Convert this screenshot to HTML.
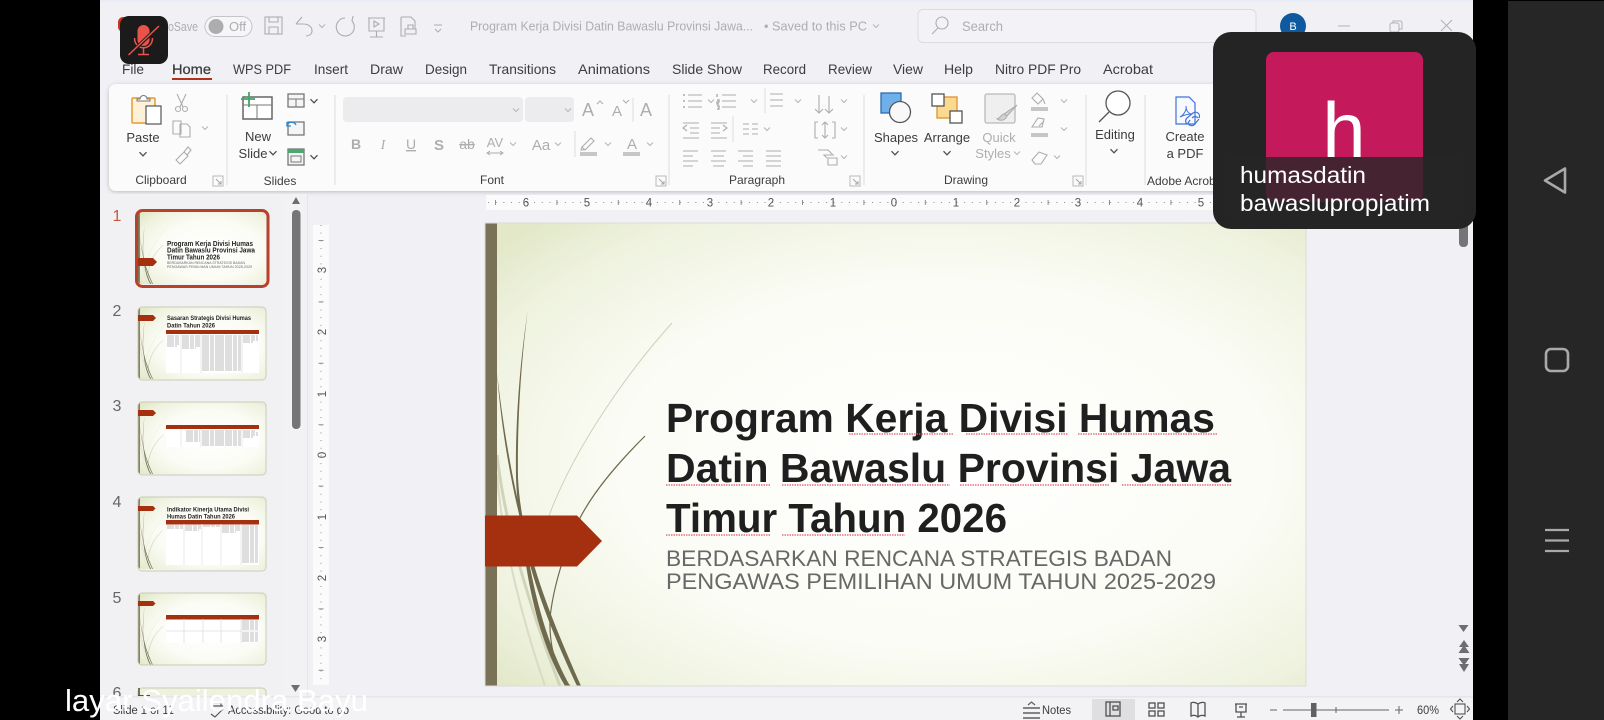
<!DOCTYPE html>
<html><head><meta charset="utf-8">
<style>
html,body{margin:0;padding:0;width:1604px;height:720px;overflow:hidden;background:#000}
svg.root{display:block;position:absolute;left:0;top:0;filter:blur(.3px)}
text{font-family:"Liberation Sans",sans-serif;fill:#3d3d3d;font-size:13px}
.g,.g text{fill:#aeaeb1}
.m{text-anchor:middle}
.i{fill:none;stroke:#adadaf;stroke-width:1.1}
.c{fill:none;stroke:#b2b2b4;stroke-width:1}
.rn{font-size:11.5px;fill:#555;text-anchor:middle}
.tt{font-weight:bold;fill:#1f1f1f}
.st{fill:#686868}
.tb{fill:none;stroke:#a9a9a9;stroke-width:.7;stroke-dasharray:7 1 4 1 9 1}
</style></head><body>
<svg class="root" width="1604" height="720" viewBox="0 0 1604 720" xmlns="http://www.w3.org/2000/svg">
<defs>
<radialGradient id="bgg" cx=".56" cy=".52" r=".72">
<stop offset="0" stop-color="#ffffff"/><stop offset=".55" stop-color="#fbfcf5"/><stop offset=".85" stop-color="#eef2de"/><stop offset="1" stop-color="#e2e8c8"/>
</radialGradient>
<filter id="sh" x="-2%" y="-10%" width="104%" height="125%"><feDropShadow dx="0" dy="1" stdDeviation="2" flood-color="#000" flood-opacity=".22"/></filter>
<g id="art">
<rect width="821" height="463" fill="url(#bgg)"/>
<path d="M12 232C20 305 45 385 75 463" fill="none" stroke="#d0d4b9" stroke-width="3"/>
<path d="M12 252C18 325 40 405 60 463" fill="none" stroke="#d9dcc4" stroke-width="2"/>
<path d="M187 100C140 152 90 225 65 290C55 316 50 336 48 350" fill="none" stroke="#cdd0b8" stroke-width="1"/>
<path d="M42.7 88C36 132 30 192 31 255C33 315 52 378 92 463L96 463C58 378 36 315 33 255C32 192 37 132 42.7 88Z" fill="#6f6a4e"/>
<path d="M12 150C16 203 25 255 35 295C40 345 50 412 80 463L85 463C56 412 44 345 37 295C27 255 18 203 12 150Z" fill="#6f6a4e"/>
<path d="M160 213C135 238 110 266 95 295C80 325 68 365 65 395C64 425 72 450 85 463" fill="none" stroke="#6f6a4e" stroke-width="1.2"/>
<rect width="12" height="463" fill="#7a7256"/>
</g>
<clipPath id="th"><rect width="821" height="463" rx="26"/></clipPath>
<g id="chev"><path d="M-3.5-1.8L0 1.8L3.5-1.8" fill="none" stroke="#505050" stroke-width="1.3"/></g>
<g id="chevg"><path d="M-3-1.5L0 1.5L3-1.5" fill="none" stroke="#b5b5b7" stroke-width="1"/></g>
<g id="launch"><rect x="-5" y="-5" width="10" height="10" fill="none" stroke="#b8b8b8"/><path d="M-2-2L3 3M3 0V3H0" fill="none" stroke="#a5a5a5"/></g>
</defs>

<!-- app background -->
<rect x="100" y="0" width="1374" height="720" fill="#f1f0f4"/>
<rect x="100" y="0" width="1374" height="1.5" fill="#e7ecf7"/>
<rect x="1473" y="0" width="35" height="720" fill="#000"/>
<rect x="1508" y="0" width="96" height="720" fill="#262626"/>
<rect x="1473" y="0" width="131" height="1" fill="#000"/>

<!-- title bar -->
<rect x="118" y="17" width="30" height="15" rx="5" fill="#c4351c"/>
<text x="168" y="31" class="g" textLength="30" lengthAdjust="spacingAndGlyphs">oSave</text>
<rect x="205" y="16.500" width="47" height="20" rx="10" fill="#f6f6f8" stroke="#c5c5c8"/>
<circle cx="216" cy="26.500" r="7.500" fill="#adadb0"/>
<text x="229" y="31" class="g">Off</text>
<g class="i"><rect x="265" y="17" width="17" height="17"/><path d="M269 17v5h9v-5M269 34v-7h9v7"/>
<path d="M296 24l6-7M296 24h7c7 0 9 4 9 7s-3 5-6 5"/>
<path d="M345 18a9 9 0 1 0 7 3l1-5"/>
<path d="M368 18h17M369 18v13h15V18M376.500 31v6M370 37h13M374 21v6l5-3z"/>
<path d="M401 17h10l4 4v8M401 17v19h5M405 29h11v5h-11zM408 29v-4h5v4"/>
<path d="M434 25h8M435 29l3 3 3-3" stroke-width="1"/></g>
<use href="#chevg" x="322" y="26"/>
<text x="470" y="30.500" class="g" textLength="283" lengthAdjust="spacingAndGlyphs">Program Kerja Divisi Datin Bawaslu Provinsi Jawa...</text>
<text x="764" y="30.500" class="g" textLength="103" lengthAdjust="spacingAndGlyphs">• Saved to this PC</text>
<use href="#chevg" x="876" y="26"/>
<rect x="918" y="9.500" width="338" height="33" rx="5" fill="#f3f2f6" stroke="#dcdce0"/>
<g class="i"><circle cx="942" cy="23" r="6"/><path d="M938 28l-6 6"/></g>
<text x="962" y="31" class="g" style="font-size:14px" textLength="41" lengthAdjust="spacingAndGlyphs">Search</text>
<circle cx="1293" cy="26" r="13" fill="#0f5a9e"/>
<text x="1293" y="30" class="m" style="fill:#fff;font-size:11px">B</text>
<g class="c"><path d="M1338 26h12"/><rect x="1390" y="23" width="9" height="9" rx="2"/><path d="M1393 23v-2h7a2 2 0 0 1 2 2v6h-3"/><path d="M1441 20l11 11M1452 20l-11 11"/></g>

<!-- tabs -->
<text x="122" y="74" style="font-size:14px" textLength="22" lengthAdjust="spacingAndGlyphs">File</text>
<text x="172" y="74" style="font-size:14px;stroke:#3d3d3d;stroke-width:.3" textLength="39" lengthAdjust="spacingAndGlyphs">Home</text>
<rect x="172" y="78" width="40" height="2" fill="#b0321a"/>
<text x="233" y="74" style="font-size:14px" textLength="58" lengthAdjust="spacingAndGlyphs">WPS PDF</text>
<text x="314" y="74" style="font-size:14px" textLength="34" lengthAdjust="spacingAndGlyphs">Insert</text>
<text x="370" y="74" style="font-size:14px" textLength="33" lengthAdjust="spacingAndGlyphs">Draw</text>
<text x="425" y="74" style="font-size:14px" textLength="42" lengthAdjust="spacingAndGlyphs">Design</text>
<text x="489" y="74" style="font-size:14px" textLength="67" lengthAdjust="spacingAndGlyphs">Transitions</text>
<text x="578" y="74" style="font-size:14px" textLength="72" lengthAdjust="spacingAndGlyphs">Animations</text>
<text x="672" y="74" style="font-size:14px" textLength="70" lengthAdjust="spacingAndGlyphs">Slide Show</text>
<text x="763" y="74" style="font-size:14px" textLength="43" lengthAdjust="spacingAndGlyphs">Record</text>
<text x="828" y="74" style="font-size:14px" textLength="44" lengthAdjust="spacingAndGlyphs">Review</text>
<text x="893" y="74" style="font-size:14px" textLength="30" lengthAdjust="spacingAndGlyphs">View</text>
<text x="944" y="74" style="font-size:14px" textLength="29" lengthAdjust="spacingAndGlyphs">Help</text>
<text x="995" y="74" style="font-size:14px" textLength="86" lengthAdjust="spacingAndGlyphs">Nitro PDF Pro</text>
<text x="1103" y="74" style="font-size:14px" textLength="50" lengthAdjust="spacingAndGlyphs">Acrobat</text>

<!-- ribbon -->
<rect x="109" y="84" width="1140" height="107" rx="7" fill="#fbfbfc" filter="url(#sh)"/>
<g stroke="#dedee0"><path d="M227 95V185M335 95V185M669 95V185M864 95V185M1086 95V185M1145 95V185"/></g>
<text x="161" y="184" class="m" style="font-size:12px">Clipboard</text>
<text x="280" y="185" class="m" style="font-size:12px">Slides</text>
<text x="492" y="184" class="m" style="font-size:12px">Font</text>
<text x="757" y="184" class="m" style="font-size:12px">Paragraph</text>
<text x="966" y="184" class="m" style="font-size:12px">Drawing</text>
<text x="1147" y="185" style="font-size:12px">Adobe Acrobat</text>
<use href="#launch" x="218" y="181"/><use href="#launch" x="661" y="181"/><use href="#launch" x="855" y="181"/><use href="#launch" x="1078" y="181"/>

<!-- Clipboard -->
<rect x="132" y="98" width="23" height="25" rx="1" fill="#fdf1d8" stroke="#e69a2d" stroke-width="1.500"/>
<path d="M137 101h13v-2h-3a3.500 3.500 0 0 0-7 0h-3z" fill="#fff" stroke="#777"/>
<rect x="146" y="106" width="15" height="18" fill="#fff" stroke="#555" stroke-width="1.200"/>
<text x="143" y="142" class="m">Paste</text>
<use href="#chev" x="143" y="154"/>
<g class="i"><path d="M177 94l6 13M186 94l-6 13"/><circle cx="178" cy="109" r="2.500"/><circle cx="185" cy="109" r="2.500"/>
<path d="M173 121h8v13h-8zM180 124h7l3 3v10h-10v-13"/>
<path d="M176 160l4 4 8-8-4-4zM184 152l4-5 3 3-4 5"/></g>
<use href="#chevg" x="205" y="128"/>

<!-- Slides -->
<rect x="243" y="97" width="29" height="22" fill="#fff" stroke="#666" stroke-width="1.500"/>
<path d="M243 105h29M257 105v14" stroke="#777" fill="none"/>
<path d="M241 99h14M249 92v15" stroke="#44a564" stroke-width="1.800" fill="none"/>
<text x="258" y="141" class="m">New</text>
<text x="253" y="158" class="m">Slide</text>
<use href="#chev" x="273" y="153"/>
<g fill="#f5f5f6" stroke="#777" stroke-width="1.300"><rect x="288" y="94" width="16" height="13"/><rect x="288" y="122" width="16" height="13"/><rect x="288" y="149" width="16" height="16"/></g>
<path d="M288 99h16M296 99v8" stroke="#777" fill="none"/>
<path d="M287 125a5 5 0 0 1 9 0M287 122v4h4" stroke="#2e86cf" stroke-width="1.300" fill="none"/>
<rect x="288" y="149" width="16" height="4" fill="#4aa771"/>
<rect x="291" y="156" width="10" height="6" fill="none" stroke="#777"/>
<use href="#chev" x="314" y="101"/><use href="#chev" x="314" y="157"/>

<!-- Font -->
<rect x="343" y="97" width="180" height="25" rx="4" fill="#ececee"/>
<rect x="525" y="97" width="49" height="25" rx="4" fill="#ececee"/>
<use href="#chevg" x="516" y="110"/><use href="#chevg" x="568" y="110"/>
<g class="g">
<text x="582" y="116" style="font-size:18px">A</text><text x="612" y="116" style="font-size:15px">A</text>
<text x="640" y="116" style="font-size:18px">A</text>
<text x="356" y="149" class="m" style="font-size:14px;font-weight:bold">B</text>
<text x="383" y="149" class="m" style="font-size:14px;font-style:italic;font-family:'Liberation Serif',serif">I</text>
<text x="411" y="149" class="m" style="font-size:14px;text-decoration:underline">U</text>
<text x="439" y="150" class="m" style="font-size:15px;font-weight:bold">S</text>
<text x="467" y="149" class="m" style="font-size:14px;text-decoration:line-through">ab</text>
<text x="495" y="147" class="m" style="font-size:13px">AV</text>
<text x="541" y="150" class="m" style="font-size:15px">Aa</text>
<text x="632" y="149" class="m" style="font-size:15px">A</text>
</g>
<g class="i"><path d="M597 104l3-3 3 3M623 100l3 3 3-3" stroke-width="1"/>
<path d="M488 153h14M490 151l-3 2 3 2M500 151l3 2-3 2" stroke-width="1"/>
<path d="M582 147l3 3 9-9-3-3zM582 147l-1 3h3"/></g>
<path d="M633 98v24M575 131v26" stroke="#dedee0" fill="none"/>
<rect x="580" y="152" width="17" height="4" fill="#c6c6c8"/>
<rect x="623" y="152" width="17" height="4" fill="#c6c6c8"/>
<use href="#chevg" x="513" y="144"/><use href="#chevg" x="558" y="144"/><use href="#chevg" x="608" y="144"/><use href="#chevg" x="650" y="144"/>

<!-- Paragraph -->
<g class="i">
<path d="M688 95h14M688 101h14M688 107h14M722 95h14M722 101h14M722 107h14M770 94h13M770 100h13M770 106h13"/>
<path d="M765 94v14" stroke-width="0"/>
<path d="M683 95h2M683 101h2M683 107h2M717 94v3M717 100h2v2h-2v2h2M717 106h2v3h-2" stroke-width="1.400"/>
<path d="M683 123h16M690 128h9M690 133h9M683 138h16M687 125l-4 3 4 3"/>
<path d="M711 123h16M711 128h9M711 133h9M711 138h16M723 125l4 3-4 3"/>
<path d="M743 124h6M743 129h6M743 134h6M752 124h6M752 129h6M752 134h6"/>
<path d="M683 151h15M683 156h10M683 161h15M683 166h10"/>
<path d="M711 151h15M713 156h11M711 161h15M713 166h11"/>
<path d="M738 151h15M743 156h10M738 161h15M743 166h10"/>
<path d="M766 151h15M766 156h15M766 161h15M766 166h15"/>
<path d="M819 95v18M815 109l4 4 4-4M829 96v17M825 109l4 4 4-4"/>
<path d="M818 122h-3v16h3M832 122h3v16h-3M825 122v16M822 125l3-3 3 3M822 135l3 3 3-3"/>
<path d="M818 150h10l5 5h-9l3 3M828 158h9v7h-9z"/>
</g>
<path d="M765 88v25M733 116v26" stroke="#dedee0" fill="none"/>
<use href="#chevg" x="711" y="101"/><use href="#chevg" x="754" y="101"/><use href="#chevg" x="798" y="101"/><use href="#chevg" x="844" y="101"/>
<use href="#chevg" x="767" y="129"/><use href="#chevg" x="844" y="129"/><use href="#chevg" x="844" y="157"/>

<!-- Drawing -->
<rect x="881" y="93" width="20" height="20" fill="#6fb0ea" stroke="#2b6cb0" stroke-width="1.300"/>
<circle cx="900" cy="112" r="10.500" fill="#f8f8f8" stroke="#555" stroke-width="1.300"/>
<text x="896" y="142" class="m">Shapes</text>
<use href="#chev" x="895" y="153"/>
<rect x="937" y="97" width="20" height="21" fill="#fbd98f" stroke="#df9133" stroke-width="1.300"/>
<rect x="932" y="94" width="12" height="12" fill="#fff" stroke="#555" stroke-width="1.300"/>
<rect x="950" y="111" width="12" height="12" fill="#fff" stroke="#555" stroke-width="1.300"/>
<text x="947" y="142" class="m">Arrange</text>
<use href="#chev" x="947" y="153"/>
<rect x="985" y="94" width="30" height="29" rx="2" fill="#efefef" stroke="#b9b9bb" stroke-width="1.300"/>
<path d="M1017 105l-10 11-3-2zM1004 114c-3 0-3 4-7 5 3 2 8 2 10-3z" fill="#d2d2d2" stroke="#aaa"/>
<text x="999" y="142" class="m g">Quick</text>
<text x="993" y="158" class="m g">Styles</text>
<use href="#chevg" x="1017" y="153"/>
<g class="i"><path d="M1032 98l5-5 6 6-5 5zM1043 99l2 5"/><path d="M1032 127h10l2-8-6-1zM1044 121l-5 5"/><path d="M1032 160l7-8 8 3-6 9h-6z"/></g>
<rect x="1031" y="107" width="17" height="4" fill="#c6c6c8"/>
<rect x="1031" y="133" width="17" height="4" fill="#c6c6c8"/>
<use href="#chevg" x="1064" y="101"/><use href="#chevg" x="1064" y="129"/><use href="#chevg" x="1057" y="157"/>

<!-- Editing -->
<circle cx="1118" cy="103" r="12" fill="#fff" stroke="#555" stroke-width="1.300"/>
<path d="M1109 112l-10 10" stroke="#555" stroke-width="1.300"/>
<text x="1115" y="139" class="m">Editing</text>
<use href="#chev" x="1114" y="151"/>
<!-- Create PDF -->
<path d="M1176 97h13l6 6v21h-19z" fill="#f7f9fe" stroke="#3e73d8" stroke-width="1.200"/>
<path d="M1180 117c4-2 7-8 6-11 0 4 2 8 6 8-4 0-8 1-12 3z" fill="none" stroke="#3e73d8"/>
<path d="M1187 124a4 4 0 0 1 0-6l6-5a4 4 0 0 1 6 5M1192 118a4 4 0 0 1 6 0M1190 120l-2 3a4 4 0 0 0 6 2l5-6" fill="none" stroke="#3e73d8" stroke-width="1.200"/>
<text x="1185" y="141" class="m">Create</text>
<text x="1185" y="158" class="m">a PDF</text>

<!-- Slide pane -->
<rect x="100" y="194" width="207" height="503" fill="#f1f1f3"/>
<rect x="282" y="194" width="25" height="503" fill="#f2f2f5"/>
<path d="M307.500 194V697" stroke="#e6e6e8"/>
<path d="M292 204l4-7 4 7z" fill="#6e6e70"/>
<rect x="292" y="210" width="8.500" height="219" rx="4" fill="#757577"/>
<path d="M291 685l4.500 7 4.500-7z" fill="#6e6e70"/>

<text x="112.500" y="221" style="font-size:16px;fill:#c85a3c">1</text>
<text x="112.500" y="316" style="font-size:16px;fill:#666">2</text>
<text x="112.500" y="411" style="font-size:16px;fill:#666">3</text>
<text x="112.500" y="507" style="font-size:16px;fill:#666">4</text>
<text x="112.500" y="603" style="font-size:16px;fill:#666">5</text>
<text x="112.500" y="698" style="font-size:16px;fill:#666">6</text>

<!-- thumb 1 -->
<g transform="translate(138 212) scale(.1559)" clip-path="url(#th)"><use href="#art"/></g>
<rect x="136.500" y="210.500" width="131.500" height="76" rx="6" fill="none" stroke="#b8412a" stroke-width="3"/>
<path d="M138 258h15l4 4-4 4h-15z" fill="#a5300f"/>
<text x="167" y="246" class="tt" style="font-size:7.200px" textLength="86" lengthAdjust="spacingAndGlyphs">Program Kerja Divisi Humas</text>
<text x="167" y="252.500" class="tt" style="font-size:7.200px" textLength="88" lengthAdjust="spacingAndGlyphs">Datin Bawaslu Provinsi Jawa</text>
<text x="167" y="259.500" class="tt" style="font-size:7.200px" textLength="53" lengthAdjust="spacingAndGlyphs">Timur Tahun 2026</text>
<text x="167" y="264" class="st" style="font-size:3.500px" textLength="78" lengthAdjust="spacingAndGlyphs">BERDASARKAN RENCANA STRATEGIS BADAN</text>
<text x="167" y="268" class="st" style="font-size:3.500px" textLength="85" lengthAdjust="spacingAndGlyphs">PENGAWAS PEMILIHAN UMUM TAHUN 2025-2029</text>

<!-- thumb 2 -->
<g transform="translate(138 307) scale(.1559)" clip-path="url(#th)"><use href="#art"/></g>
<rect x="138" y="307" width="128" height="73" rx="4" fill="none" stroke="#c9cbb5"/>
<path d="M138 315h15l3 3-3 3h-15z" fill="#a5300f"/>
<text x="167" y="320" class="tt" style="font-size:6.800px" textLength="84" lengthAdjust="spacingAndGlyphs">Sasaran Strategis Divisi Humas</text>
<text x="167" y="327.500" class="tt" style="font-size:6.800px" textLength="48" lengthAdjust="spacingAndGlyphs">Datin Tahun 2026</text>
<rect x="166" y="330" width="93" height="43" fill="#fff"/>
<rect x="166" y="330" width="93" height="4" fill="#a5300f"/>
<g stroke="#e3e3e3" stroke-width=".8"><path d="M181 334v39M201 334v39M242 334v39"/></g>
<path class="tb" d="M167 336h13M167 338h13M167 340h13M167 342h13M167 344h13M167 346h10M182 336h18M182 338h18M182 340h18M182 342h18M182 344h18M182 346h18M182 348h14"/>
<path class="tb" d="M202 336h39M202 338h39M202 340h39M202 342h39M202 344h39M202 346h39M202 348h39M202 350h39M202 352h39M202 354h39M202 356h39M202 358h39M202 360h39M202 362h39M202 364h39M202 366h39M202 368h39M202 370h39"/>
<path class="tb" d="M243 336h15M243 338h15M243 340h15M243 342h10"/>

<!-- thumb 3 -->
<g transform="translate(138 402) scale(.1559)" clip-path="url(#th)"><use href="#art"/></g>
<rect x="138" y="402" width="128" height="73" rx="4" fill="none" stroke="#c9cbb5"/>
<path d="M138 410h15l3 3-3 3h-15z" fill="#a5300f"/>
<rect x="166" y="425" width="93" height="22" fill="#fff"/>
<rect x="166" y="425" width="93" height="4" fill="#a5300f"/>
<g stroke="#e3e3e3" stroke-width=".8"><path d="M181 429v18M201 429v18M242 429v18"/></g>
<path class="tb" d="M186 431h14M186 433h14M186 435h14M186 437h14M186 439h14M186 441h14M202 431h39M202 433h39M202 435h39M202 437h39M202 439h39M202 441h39M202 443h39M202 445h39M243 431h12M243 433h15M243 435h15M243 437h10"/>

<!-- thumb 4 -->
<g transform="translate(138 497) scale(.1559)" clip-path="url(#th)"><use href="#art"/></g>
<rect x="138" y="497" width="128" height="74" rx="4" fill="none" stroke="#c9cbb5"/>
<path d="M138 506h15l2.500 2.500-2.500 2.500h-15z" fill="#a5300f"/>
<text x="167" y="511.500" class="tt" style="font-size:6.800px" textLength="82" lengthAdjust="spacingAndGlyphs">Indikator Kinerja Utama Divisi</text>
<text x="167" y="518.500" class="tt" style="font-size:6.800px" textLength="68" lengthAdjust="spacingAndGlyphs">Humas Datin Tahun 2026</text>
<rect x="166" y="520" width="93" height="45" fill="#fff"/>
<rect x="166" y="520" width="93" height="4.500" fill="#a5300f"/>
<g stroke="#e3e3e3" stroke-width=".8"><path d="M184 524v41M202 524v41M221 524v41M241 524v41"/></g>
<path class="tb" d="M167 526h16M167 528h16M185 526h16M185 528h16M185 530h14M203 526h17M222 526h18M222 528h18M222 530h18M222 532h14"/>
<path class="tb" d="M242 526h16M242 528h16M242 530h16M242 532h16M242 534h16M242 536h16M242 538h16M242 540h16M242 542h16M242 544h16M242 546h16M242 548h16M242 550h16M242 552h16M242 554h16M242 556h16M242 558h16M242 560h16M242 562h16"/>

<!-- thumb 5 -->
<g transform="translate(138 593) scale(.1559)" clip-path="url(#th)"><use href="#art"/></g>
<rect x="138" y="593" width="128" height="72" rx="4" fill="none" stroke="#c9cbb5"/>
<path d="M138 601h15l2.500 2.500-2.500 2.500h-15z" fill="#a5300f"/>
<rect x="166" y="615" width="93" height="28" fill="#fff"/>
<rect x="166" y="615" width="93" height="4.500" fill="#a5300f"/>
<g stroke="#e0e0e0" stroke-width=".8"><path d="M184 619v24M203 619v24M221 619v24M241 619v24M166 631h93"/></g>
<path class="tb" d="M242 621h16M242 623h16M242 625h16M242 627h16M242 629h16M242 633h16M242 635h16M242 637h16M242 639h16M242 641h16"/>

<!-- thumb 6 -->
<path d="M138 697v-5a4 4 0 0 1 4-4h120a4 4 0 0 1 4 4v5z" fill="#eef1dd" stroke="#c9cbb5"/>
<rect x="138" y="688" width="2" height="9" fill="#7a7256"/>
<rect x="138" y="695" width="12" height="2" fill="#a5300f"/>

<!-- Vertical ruler -->
<rect x="313" y="225" width="16" height="460" fill="#fbfbfc"/>
<path d="M321 225V685" stroke="#8f8f8f" fill="none" stroke-dasharray="1 6.680"/>
<path d="M321 240V685" stroke="#8f8f8f" fill="none" stroke-width="5" stroke-dasharray="1 60.400"/>
<text class="rn" transform="translate(326 270) rotate(-90)">3</text>
<text class="rn" transform="translate(326 332) rotate(-90)">2</text>
<text class="rn" transform="translate(326 394) rotate(-90)">1</text>
<text class="rn" transform="translate(326 455) rotate(-90)">0</text>
<text class="rn" transform="translate(326 517) rotate(-90)">1</text>
<text class="rn" transform="translate(326 578) rotate(-90)">2</text>
<text class="rn" transform="translate(326 639) rotate(-90)">3</text>

<!-- Horizontal ruler -->
<rect x="486" y="195" width="730" height="15" fill="#fbfbfc"/>
<path d="M488 202.500H1216" stroke="#8f8f8f" fill="none" stroke-dasharray="1 6.680"/>
<path d="M495 202.500H1216" stroke="#8f8f8f" fill="none" stroke-width="5" stroke-dasharray="1 60.400"/>
<text x="526" y="206.500" class="rn">6</text><text x="587" y="206.500" class="rn">5</text><text x="649" y="206.500" class="rn">4</text><text x="710" y="206.500" class="rn">3</text><text x="771" y="206.500" class="rn">2</text><text x="833" y="206.500" class="rn">1</text><text x="894" y="206.500" class="rn">0</text><text x="956" y="206.500" class="rn">1</text><text x="1017" y="206.500" class="rn">2</text><text x="1078" y="206.500" class="rn">3</text><text x="1140" y="206.500" class="rn">4</text><text x="1201" y="206.500" class="rn">5</text>

<!-- Main slide -->
<g transform="translate(485 223)"><use href="#art"/></g>
<rect x="485" y="223" width="821" height="463" fill="none" stroke="#dcdcd6" stroke-width="1"/>
<path d="M485 515.500h92l25 25.500-25 25.500h-92z" fill="#a5300f"/>
<text x="666" y="432" class="tt" style="font-size:41px" textLength="549" lengthAdjust="spacingAndGlyphs">Program Kerja Divisi Humas</text>
<text x="666" y="482" class="tt" style="font-size:41px" textLength="565" lengthAdjust="spacingAndGlyphs">Datin Bawaslu Provinsi Jawa</text>
<text x="666" y="532" class="tt" style="font-size:41px" textLength="341" lengthAdjust="spacingAndGlyphs">Timur Tahun 2026</text>
<g stroke="#e0566e" stroke-width="1.200" stroke-dasharray="1.500 1" fill="none">
<path d="M849 434h105M966 434h102M1078 434h139M666 485h104M782 485h168M960 485h150M1122 485h109M666 535h104M782 535h123"/>
</g>
<text x="666" y="566" class="st" style="font-size:22.500px" textLength="506" lengthAdjust="spacingAndGlyphs">BERDASARKAN RENCANA STRATEGIS BADAN</text>
<text x="666" y="589" class="st" style="font-size:22.500px" textLength="550" lengthAdjust="spacingAndGlyphs">PENGAWAS PEMILIHAN UMUM TAHUN 2025-2029</text>

<!-- Right scrollbar -->
<rect x="1459" y="195" width="9" height="52" rx="4" fill="#757577"/>
<g fill="#6e6e70"><path d="M1458.500 625h10l-5 7z"/>
<path d="M1464 640l5 7h-10zM1464 645l5.500 8h-11z"/>
<path d="M1458.500 658h11l-5.500 7.500zM1459 664h10l-5 8z"/></g>

<!-- Status bar -->
<rect x="100" y="697" width="1373" height="23" fill="#f3f3f5"/>
<rect x="100" y="696" width="1373" height="1.500" fill="#e6e6e8"/>
<text x="113" y="714" style="font-size:11.500px" textLength="61" lengthAdjust="spacingAndGlyphs">Slide 1 of 11</text>
<g fill="none" stroke="#555" stroke-width="1.200"><path d="M212 706h11M214 703h7v3M211 714l4 3 8-8M214 709h-2"/></g>
<text x="228" y="714" style="font-size:11.500px" textLength="121" lengthAdjust="spacingAndGlyphs">Accessibility: Good to go</text>
<text x="65" y="711" style="font-size:31px;fill:#fff" textLength="303" lengthAdjust="spacingAndGlyphs">layar Syailendra Bayu</text>

<g fill="none" stroke="#606060" stroke-width="1.200">
<path d="M1023 708h17M1023 713h17M1023 718h17" stroke-width="1.400"/><path d="M1028 705l3.500-3 3.500 3"/></g>
<text x="1042" y="714" style="font-size:11.500px" textLength="29" lengthAdjust="spacingAndGlyphs">Notes</text>
<rect x="1092" y="699" width="43" height="21" fill="#dfdfe2"/>
<g fill="none" stroke="#505050" stroke-width="1.300" transform="translate(0 -1)">
<rect x="1106" y="703" width="14" height="14"/><path d="M1110 703v14M1113 707h5v4h-5z"/>
<rect x="1149" y="704" width="6" height="5"/><rect x="1158" y="704" width="6" height="5"/><rect x="1149" y="712" width="6" height="5"/><rect x="1158" y="712" width="6" height="5"/>
<path d="M1198 705c-3-2-6-2-7-1v13c2-1 5-1 7 1 2-2 5-2 7-1V704c-1-1-4-1-7 1zM1198 705v13"/>
<path d="M1235 705h12M1236 705v8h10v-8M1241 713v5M1237 718h8M1239 708h4"/>
</g>
<path d="M1270 710h7M1395 710h8M1399 706v8M1283 710h106M1336 707v6" stroke="#666" stroke-width="1" fill="none"/>
<rect x="1311" y="703" width="5.500" height="14" fill="#606060"/>
<text x="1417" y="714" style="font-size:11.500px" textLength="22" lengthAdjust="spacingAndGlyphs">60%</text>
<g fill="none" stroke="#505050" stroke-width="1.100"><rect x="1455" y="704" width="10" height="10"/><path d="M1457 702l3-3 3 3M1453 706l-2.500 3 2.500 3M1467 706l2.500 3-2.500 3M1457 716l3 3 3-3"/></g>

<!-- Mic tile -->
<rect x="120" y="16" width="48" height="48" rx="9" fill="#1b1b1b"/>
<rect x="137.500" y="25" width="12" height="21" rx="6" fill="#e8544b"/>
<g stroke="#e8544b" fill="none" stroke-width="1.500">
<path d="M134.500 38c0 13 18 13 18 0M143.500 47v7M138 54.500h11"/>
</g>
<path d="M129 55L159 26" stroke="#1b1b1b" stroke-width="3.500" fill="none"/>
<path d="M128.500 55L159 26" stroke="#e8544b" stroke-width="1.500" fill="none"/>

<!-- Popup -->
<rect x="1213" y="32" width="263" height="197" rx="18" fill="#242424"/>
<rect x="1266" y="52" width="157" height="150" rx="8" fill="#c4195a"/>
<text x="1344" y="157" class="m" style="font-size:78px;fill:#fff">h</text>
<rect x="1223" y="157" width="242" height="61" rx="6" fill="#262626" fill-opacity=".8"/>
<text x="1240" y="183" style="font-size:23px;fill:#fff" textLength="126" lengthAdjust="spacingAndGlyphs">humasdatin</text>
<text x="1240" y="211" style="font-size:23px;fill:#fff" textLength="190" lengthAdjust="spacingAndGlyphs">bawaslupropjatim</text>

<!-- Android nav -->
<path d="M1565 168.500v24l-20-12z" fill="none" stroke="#a9a9a9" stroke-width="2.600" stroke-linejoin="round"/>
<rect x="1546" y="349" width="22" height="22" rx="5" fill="none" stroke="#a9a9a9" stroke-width="2.600"/>
<path d="M1545 530h24M1545 540.500h24M1545 551h24" stroke="#a9a9a9" stroke-width="2.200"/>
</svg>
</body></html>
